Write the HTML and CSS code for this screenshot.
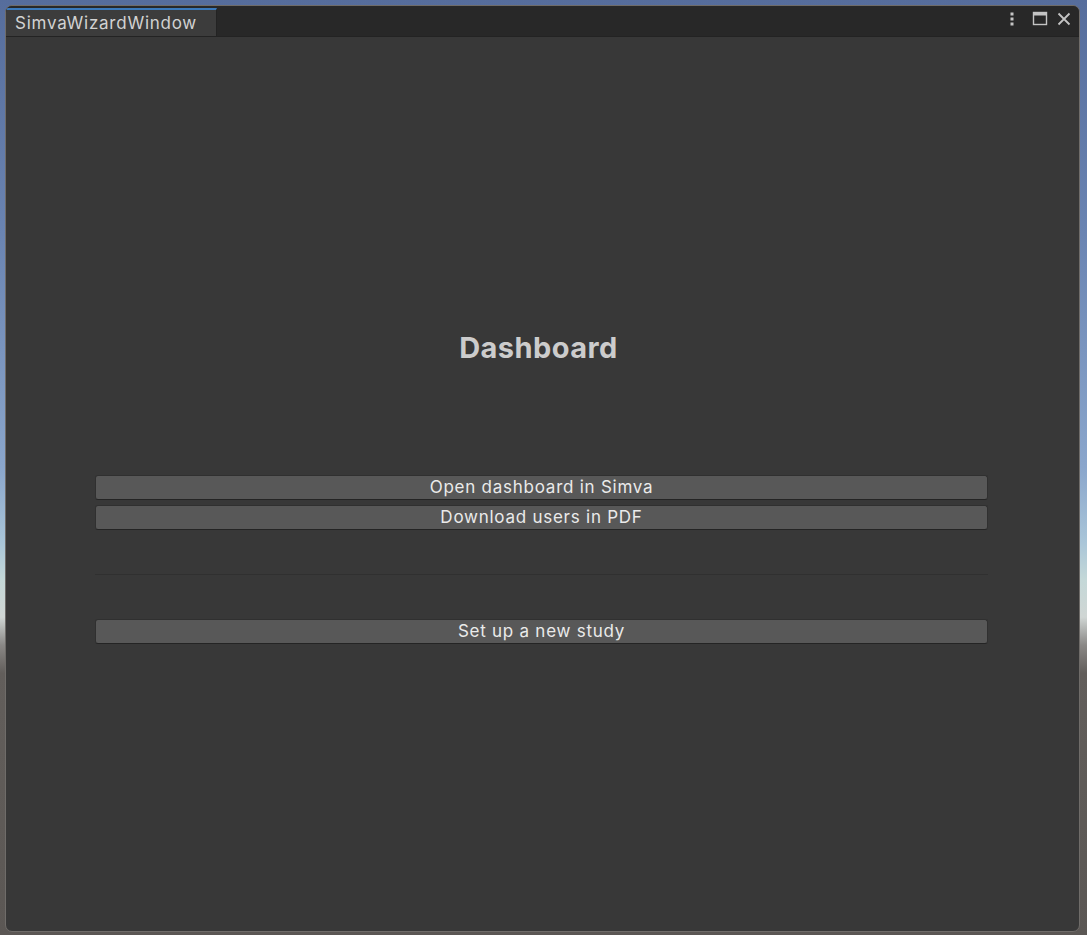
FILE: index.html
```html
<!DOCTYPE html>
<html>
<head>
<meta charset="utf-8">
<link rel="stylesheet" href="styles.css">
</head>
<body>
<div class="window">
  <div class="tabbar">
    <div class="tab">SimvaWizardWindow</div>
    <div class="tools">
      <svg class="ico kebab" width="10" height="16" viewBox="0 0 10 16"><rect x="3.5" y="1.5" width="3" height="3" fill="#c4c4c4"/><rect x="3.5" y="6.5" width="3" height="3" fill="#c4c4c4"/><rect x="3.5" y="11.5" width="3" height="3" fill="#c4c4c4"/></svg>
      <svg class="ico" width="16" height="16" viewBox="0 0 16 16"><rect x="1.5" y="1.5" width="13" height="12" fill="none" stroke="#c4c4c4" stroke-width="1.4"/><rect x="1.5" y="1.5" width="13" height="3" fill="#c4c4c4"/></svg>
      <svg class="ico" width="16" height="16" viewBox="0 0 16 16"><path d="M2.5 2.5 L13.5 13.5 M13.5 2.5 L2.5 13.5" stroke="#c4c4c4" stroke-width="1.8"/></svg>
    </div>
  </div>
  <div class="content">
    <h1 class="title">Dashboard</h1>
    <div class="group">
      <button class="btn">Open dashboard in Simva</button>
      <button class="btn">Download users in PDF</button>
    </div>
    <div class="sep"></div>
    <button class="btn">Set up a new study</button>
  </div>
</div>
</body>
</html>
```
FILE: styles.css
```css
html, body {
  margin: 0;
  height: 100%;
}
body {
  width: 1087px;
  height: 935px;
  box-sizing: border-box;
  padding: 5px 7px 3px 5px;
  background: linear-gradient(to bottom, #566d9c 0%, #6a84b2 25%, #8aa6cc 50%, #a9c5d8 58%, #c4d8d8 62%, #d0d6d4 66%, #8a8886 69%, #625e5b 72%, #5b5754 100%);
  font-family: Inter, "Noto Sans", sans-serif;
  overflow: hidden;
}
.window {
  height: 100%;
  background: #383838;
  border: 1px solid #6f6c69;
  border-radius: 7px;
  overflow: hidden;
  display: flex;
  flex-direction: column;
  box-sizing: border-box;
}
.tabbar {
  height: 30px;
  flex: none;
  background: #282828;
  border-bottom: 1px solid #232323;
  display: flex;
  align-items: flex-end;
  justify-content: space-between;
}
.tab {
  width: 211px;
  height: 28px;
  box-sizing: border-box;
  background: #3c3c3c;
  border-top: 2px solid #3a79bb;
  border-right: 1px solid #232323;
  color: #d2d2d2;
  font-size: 17px;
  letter-spacing: 0.75px;
  line-height: 26px;
  padding-left: 9px;
}
.tools {
  align-self: center;
  display: flex;
  gap: 8px;
  align-items: center;
  padding-right: 7px;
  margin-top: -4px;
}
.ico { display: block; }
.kebab { margin-right: 7px; }
.content {
  flex: 1;
  padding: 0 91px 0 89px;
  display: flex;
  flex-direction: column;
}
.title {
  margin: 293px 6px 0 0;
  text-align: center;
  font-size: 29px;
  line-height: 36px;
  font-weight: 700;
  letter-spacing: 0.45px;
  color: #cccccc;
}
.group {
  margin-top: 109px;
  display: flex;
  flex-direction: column;
  gap: 5px;
}
.btn {
  display: block;
  width: 100%;
  height: 25px;
  box-sizing: border-box;
  background: #585858;
  border: 1px solid #303030;
  border-bottom-color: #242424;
  border-radius: 3px;
  color: #eaeaea;
  font-family: Inter, "Noto Sans", sans-serif;
  font-size: 17px;
  letter-spacing: 0.75px;
  line-height: 21px;
  padding: 0;
  text-align: center;
}
.sep {
  height: 1px;
  background: #303030;
  margin: 44px 0 44px;
}
```
